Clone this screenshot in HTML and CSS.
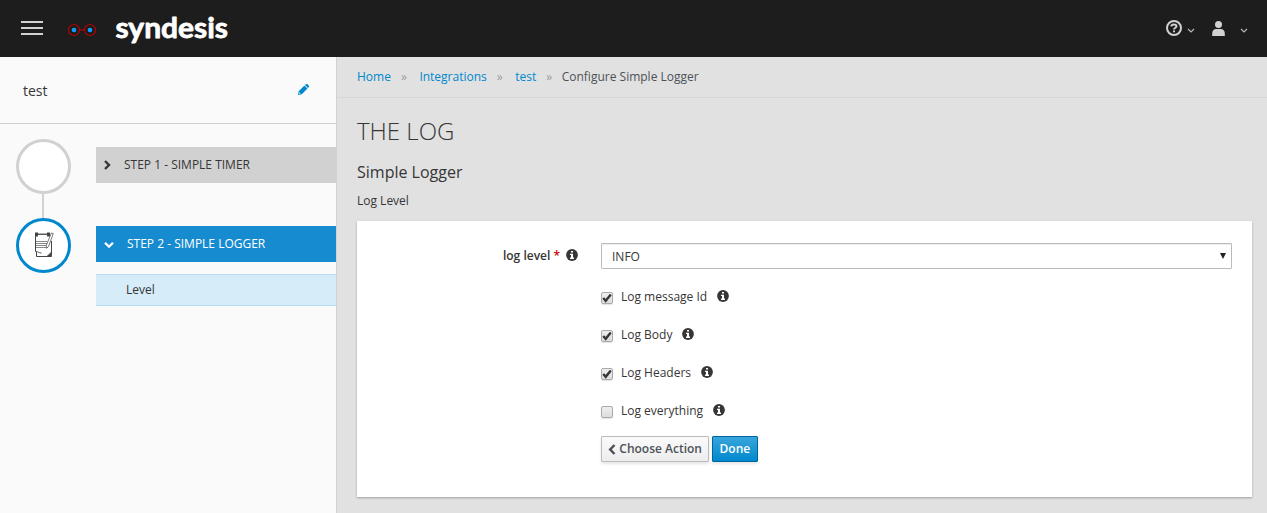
FILE: index.html
```html
<!DOCTYPE html>
<html lang="en">
<head>
<meta charset="utf-8">
<title>Syndesis</title>
<link rel="stylesheet" href="styles.css">
</head>
<body>
<svg width="0" height="0" class="defs">
  <symbol id="info" viewBox="0 0 12 12"><circle cx="6" cy="6" r="5.9" fill="#363636"/><path d="M5 2h2v1.600H5zM4 4.700h3v3.900h1V10H4V8.600h1V6H4z" fill="#fff"/></symbol>
  <symbol id="caret" viewBox="0 0 8 6"><path d="M1 1l3 3 3-3" fill="none" stroke="#b5b5b5" stroke-width="1.200"/></symbol>
</svg>
<header class="navbar">
  <svg class="burger" width="22" height="14" viewBox="0 0 22 14"><path d="M0 1h22M0 7h22M0 13h22" stroke="#d1d1d1" stroke-width="2"/></svg>
  <svg class="glasses" width="28" height="14" viewBox="0 0 28 14"><g fill="none" stroke="#b90000" stroke-width="1.200"><circle cx="6" cy="7" r="5.500"/><circle cx="22" cy="7" r="5.500"/><path d="M11.500 7h5"/></g><circle cx="6" cy="7" r="2.300" fill="#0d9bff"/><circle cx="22" cy="7" r="2.300" fill="#0d9bff"/></svg>
  <svg class="brand" width="116" height="40" viewBox="0 0 116 40"><text x="1.500" y="28.700" textLength="112.500" lengthAdjust="spacingAndGlyphs">syndesis</text></svg>
  <div class="tools">
    <svg width="16" height="16" viewBox="0 0 16 16"><circle cx="8" cy="8" r="7" fill="none" stroke="#d1d1d1" stroke-width="2"/><path d="M5.300 6.300C5.500 3.700 10.500 3.800 10.500 6.200 10.500 7.800 8 7.700 8 9.500" fill="none" stroke="#d1d1d1" stroke-width="2"/><path d="M7 10.500h2v1.800H7z" fill="#d1d1d1"/></svg>
    <svg class="caret" width="8" height="6"><use href="#caret"/></svg>
    <svg class="user" width="13" height="15" viewBox="0 0 13 15"><circle cx="6.500" cy="3.500" r="3.500" fill="#d1d1d1"/><path d="M.2 15v-2.500C.2 9.500 2 8 4 8h5c2 0 3.800 1.500 3.800 4.500V15z" fill="#d1d1d1"/></svg>
    <svg class="caret caret-user" width="8" height="6"><use href="#caret"/></svg>
  </div>
</header>
<div class="shell">
  <aside class="sidebar">
    <div class="name"><span>test</span>
      <svg width="11" height="11" viewBox="0 0 11 11"><path d="M0 11l.7-3.800L6.400 1.500l3.100 3.100L3.800 10.300zM7 .9L8 0q.7-.3 1.200.1L10.900 1.800q.4.700 0 1.200L10 4z" fill="#0088ce"/><path d="M1.200 8.300l1.500 1.500-1 .2-.7-.7z" fill="#fafafa"/></svg>
    </div>
    <div class="steps">
      <div class="step">
        <div class="rail"><div class="circle"></div><div class="line"></div></div>
        <div class="body"><div class="bar"><svg width="8" height="10" viewBox="0 0 8 10"><path d="M2 1l4 4-4 4" fill="none" stroke="#363636" stroke-width="2.400"/></svg><span>STEP 1 - SIMPLE TIMER</span></div></div>
      </div>
      <div class="step">
        <div class="rail"><div class="circle active">
          <svg width="20" height="26" viewBox="0 0 20 26"><path d="M2 3h15v19l-1.500 2.500H2z" fill="#fff"/><path d="M1.500 2v17.500M2.500 20v4.500h14.500M17.500 9v13" fill="none" stroke="#444" stroke-width="1"/><path d="M1 2.200h15" fill="none" stroke="#333" stroke-width="1.200"/><path d="M1 .5h3v4H1zM13 .5h3v4h-3z" fill="#444"/><path d="M2 9.500h11M2 11.500h11M2 13.500h11M2 15.500h12" stroke="#888"/><path d="M19.300 1.500L14.500 14.500l-2 1.700-.3-2.500L17.300 1z" fill="#fff" stroke="#555" stroke-width=".8"/><path d="M1.500 19.500c3 0 3 1.500 6 1.500M13.500 24l4-4v4.500z" stroke="#444" fill="#444" stroke-width=".8"/></svg>
        </div></div>
        <div class="body"><div class="bar active"><svg width="10" height="8" viewBox="0 0 10 8"><path d="M1 1.700l4 4 4-4" fill="none" stroke="#fff" stroke-width="2.300"/></svg><span>STEP 2 - SIMPLE LOGGER</span></div><div class="sub">Level</div></div>
      </div>
    </div>
  </aside>
  <main>
    <nav class="crumbs"><a>Home</a><i>»</i><a>Integrations</a><i>»</i><a>test</a><i class="last">»</i><span>Configure Simple Logger</span></nav>
    <section class="content">
      <h1>THE LOG</h1>
      <h2>Simple Logger</h2>
      <p>Log Level</p>
      <form class="card">
        <div class="label">log level <b>*</b><svg width="12" height="12"><use href="#info"/></svg></div>
        <div class="fields">
          <div class="select"><span>INFO</span><svg width="6" height="6" viewBox="0 0 6 6"><path d="M0 0h6L3 6z" fill="#222"/></svg></div>
          <div class="check"><span class="box"><svg width="10" height="10" viewBox="0 0 10 10"><path d="M1.200 5l2.500 2.800L8.800 1.500" fill="none" stroke="#363636" stroke-width="2.400"/></svg></span><span>Log message Id</span><svg width="12" height="12"><use href="#info"/></svg></div>
          <div class="check"><span class="box"><svg width="10" height="10" viewBox="0 0 10 10"><path d="M1.200 5l2.500 2.800L8.800 1.500" fill="none" stroke="#363636" stroke-width="2.400"/></svg></span><span>Log Body</span><svg width="12" height="12"><use href="#info"/></svg></div>
          <div class="check"><span class="box"><svg width="10" height="10" viewBox="0 0 10 10"><path d="M1.200 5l2.500 2.800L8.800 1.500" fill="none" stroke="#363636" stroke-width="2.400"/></svg></span><span>Log Headers</span><svg width="12" height="12"><use href="#info"/></svg></div>
          <div class="check"><span class="box"></span><span>Log everything</span><svg width="12" height="12"><use href="#info"/></svg></div>
          <div class="buttons"><button type="button" class="btn"><svg width="8" height="11" viewBox="0 0 8 11"><path d="M6.500 1L2.200 5.500 6.500 10" fill="none" stroke="#4d5258" stroke-width="2.500"/></svg>Choose Action</button><button type="button" class="btn primary">Done</button></div>
        </div>
      </form>
    </section>
  </main>
</div>
</body>
</html>
```
FILE: styles.css
```css
* { box-sizing: border-box; }
body { margin: 0; height: 513px; overflow: hidden; font: 12px/20px "Open Sans", sans-serif; color: #363636; background: #e1e1e1; }
svg { display: block; flex: none; }
.defs { position: absolute; }
.navbar { height: 57px; background: #1d1d1d; display: flex; align-items: flex-start; padding-left: 21px; }
.burger { margin-top: 21px; }
.glasses { margin: 23px 0 0 25px; }
.brand { margin: 9px 0 0 18px; }
.brand text { font: 700 29px "Lato", sans-serif; fill: #fff; stroke: #fff; stroke-width: .8px; stroke-linejoin: round; }
.tools { margin-left: auto; display: flex; padding: 20px 19px 0 0; }
.caret { margin: 8px 0 0 5px; }
.user { margin: 1px 0 0 17px; }
.caret-user { margin-left: 15px; }
.shell { display: flex; height: 456px; }
.sidebar { width: 337px; flex: none; background: #fafafa; border-right: 1px solid #d1d1d1; }
.name { height: 67px; border-bottom: 1px solid #d1d1d1; display: flex; align-items: center; justify-content: space-between; padding: 1px 27px 0 23px; font-size: 14px; }
.name svg { margin-top: -2px; }
.steps { padding: 15px 0 0 16px; }
.step { display: flex; }
.rail { width: 80px; display: flex; flex-direction: column; }
.circle { width: 55px; height: 55px; border: 3px solid #d1d1d1; border-radius: 50%; background: #fff; display: flex; align-items: center; justify-content: center; padding-bottom: 2px; }
.circle.active { border-color: #0088ce; }
.line { width: 2px; height: 24px; margin-left: 26px; background: #d1d1d1; }
.body { flex: 1; padding-top: 8px; }
.bar { height: 36px; background: #d1d1d1; display: flex; align-items: center; gap: 13px; padding: 0 0 1px 7px; }
.bar.active { background: #178bd0; color: #fff; }
.bar svg { margin-top: 1px; }
.bar.active svg { margin: 3px 0 0 1px; }
.bar.active { padding-left: 7px; gap: 13px; }
.sub { margin-top: 12px; height: 32px; line-height: 30px; padding-left: 30px; background: #d6edf9; border: solid #b4dcf3; border-width: 1px 0; }
main { flex: 1; }
.crumbs { height: 41px; border-bottom: 1px solid #d7d7d7; padding-left: 20px; display: flex; line-height: 39px; color: #4d5258; }
.crumbs a { color: #0088ce; }
.crumbs i { font-style: normal; color: #9c9c9c; margin: 0 12.500px 0 10px; }
.crumbs .last { margin-right: 9.500px; }
.content { padding: 18px 15px 0 20px; }
h1 { margin: 0; font-size: 24px; font-weight: 300; line-height: 30px; }
h2 { margin: 16px 0 0; font-size: 16px; font-weight: 400; line-height: 20px; }
p { margin: 9px 0 10px; }
.card { height: 276px; background: #fff; box-shadow: 0 1px 2px rgba(0,0,0,.3); display: flex; padding: 22px 20px 0 0; }
.label { width: 221px; height: 26px; display: flex; align-items: center; justify-content: flex-end; font-weight: 600; white-space: pre; }
.label b { color: #c00; font-weight: 600; }
.label svg { margin: -2px 0 0 6px; }
.fields { flex: 1; margin-left: 23px; }
.select { height: 26px; border: 1px solid #bbb; border-radius: 1px; box-shadow: inset 0 1px 1px rgba(3,3,3,.075); display: flex; align-items: center; justify-content: space-between; padding: 2px 5px 0 10px; }
.select svg { margin-top: -2px; }
.select + .check { margin-top: 18px; }
.check { height: 20px; margin-bottom: 18px; display: flex; align-items: center; }
.box { width: 12px; height: 12px; margin: 2px 8px 0 0; border: 1px solid #aaa; border-radius: 2px; background: linear-gradient(#eee, #ddd); box-shadow: 0 1px 1px rgba(0,0,0,.12); }
.check > svg { margin: -2px 0 0 9.500px; }
.buttons { display: flex; gap: 3px; margin-top: -3px; }
.btn { height: 26px; padding: 0 6.300px; display: flex; align-items: center; gap: 3px; font: 600 12px/20px "Open Sans", sans-serif; color: #4d5258; background: linear-gradient(#fafafa, #ededed); border: 1px solid #bbb; border-radius: 1px; box-shadow: 0 2px 3px rgba(3,3,3,.1); }
.btn.primary { color: #fff; background: linear-gradient(#39a5dc, #0088ce); border-color: #00659c; }
```
